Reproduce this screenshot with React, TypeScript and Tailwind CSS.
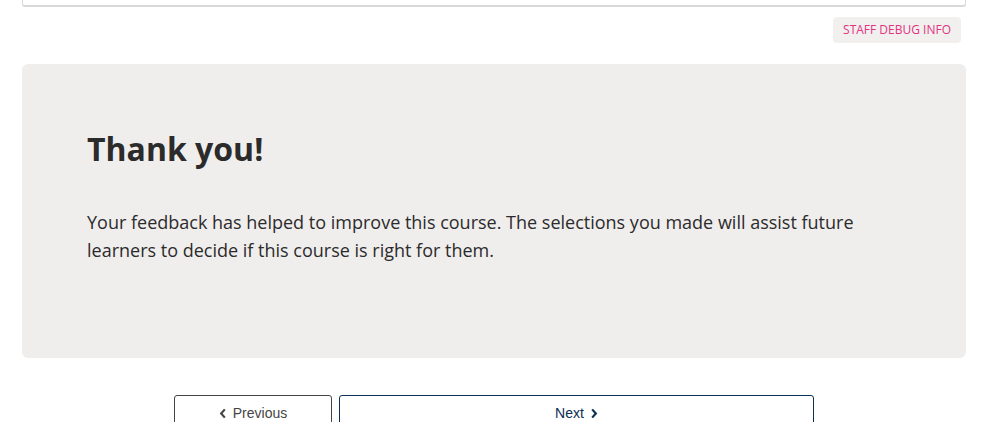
import React from 'react';

// Chevron usado nos botões de navegação.
function Chevron({ dir }: { dir: 'left' | 'right' }) {
  return (
    <svg width="8" height="11" viewBox="0 0 8 12" className="inline-block" aria-hidden>
      {dir === 'left'
        ? <path d="M6 1.5 L2 6 L6 10.5" fill="none" stroke="currentColor" strokeWidth="2.4" />
        : <path d="M2 1.5 L6 6 L2 10.5" fill="none" stroke="currentColor" strokeWidth="2.4" />}
    </svg>
  );
}

export default function App() {
  return (
    <div className="w-[996px] h-[422px] overflow-hidden bg-white" style={{ fontFamily: '"Open Sans", sans-serif' }}>
      <div className="mx-[22px] w-[944px]">
        {/* Cartão anterior, cortado no topo */}
        <div className="h-[8px] border-x border-b-2 border-[#d9d9d9] rounded-b-[3px] -mt-px" />

        <div className="flex justify-end mt-[10px] pr-[5px]">
          <button className="h-[26px] px-[10px] rounded-[4px] bg-[#f2f0ef] text-[12px] text-[#e0347f] uppercase">
            Staff Debug Info
          </button>
        </div>

        <div className="mt-[21px] h-[294px] rounded-[6px] bg-[#f0eeed] pl-[65px] pr-[60px] pt-[63px]">
          <h1 className="text-[32px] leading-[44px] font-bold text-[#2b2b2b]">Thank you!</h1>
          <p className="mt-[37px] text-[18px] leading-[28px] text-[#2b2b2b] max-w-[790px]">
            Your feedback has helped to improve this course. The selections you made will assist future learners to decide if this course is right for them.
          </p>
        </div>

        <div className="mt-[37px] flex justify-center gap-[7px]" style={{ fontFamily: '"Liberation Sans", Arial, sans-serif' }}>
          <button className="w-[158px] h-[36px] border border-[#454545] rounded-[3px] bg-white text-[14px] text-[#454545] flex items-center justify-center gap-[6px]">
            <Chevron dir="left" /> Previous
          </button>
          <button className="w-[475px] h-[36px] border border-[#0a3055] rounded-[3px] bg-white text-[14px] text-[#0a3055] flex items-center justify-center gap-[6px]">
            Next <Chevron dir="right" />
          </button>
        </div>
      </div>
    </div>
  );
}
